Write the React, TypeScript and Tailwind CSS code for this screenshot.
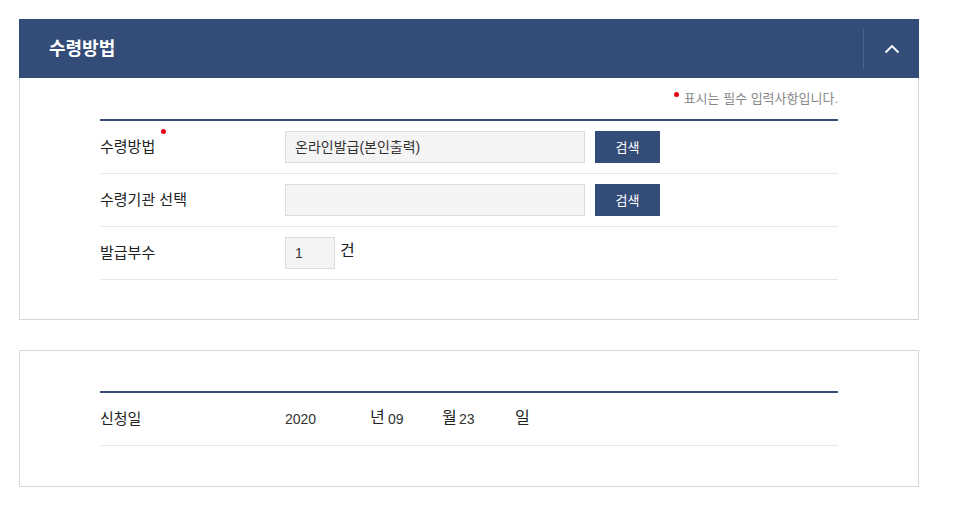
const font = "font-['Liberation_Sans','Noto_Sans_CJK_KR',sans-serif]";

function ChevronUp() {
    return (
        <svg width="16" height="10" viewBox="0 0 16 10" fill="none" aria-hidden="true">
            <path d="M1.5 8.5L8 2l6.5 6.5" stroke="white" strokeWidth="1.8" />
        </svg>
    );
}

function SearchButton() {
    return (
        <button
            type="button"
            className="ml-[10px] h-[32px] w-[65px] bg-[#334c78] text-[13px] leading-none text-white"
        >
            검색
        </button>
    );
}

export default function App() {
    return (
        <div className={`${font} min-h-[511px] bg-white px-[19px] pt-[19px] text-[#222]`}>
            <section className="w-[900px]">
                <header className="flex h-[59px] items-center bg-[#334c78]">
                    <h2 className="flex-1 pl-[30px] text-[18px] font-bold leading-none text-white">
                        수령방법
                    </h2>
                    <div className="h-[40px] w-px bg-[#4b6390]" />
                    <button type="button" className="grid h-[59px] w-[55px] place-items-center">
                        <ChevronUp />
                    </button>
                </header>

                <div className="border border-t-0 border-[#d6d6d6] px-[80px] pb-[39px] pt-[13px]">
                    <p className="flex items-center justify-end text-[13px] leading-[16px] text-[#888]">
                        <span className="mr-[5px] mb-[9px] h-[5px] w-[5px] rounded-full bg-[#e60012]" />
                        표시는 필수 입력사항입니다.
                    </p>

                    <div className="mt-[12px] border-t-2 border-[#334c78]">
                        <div className="flex h-[53px] items-center border-b border-[#e8e8e8]">
                            <div className="relative w-[185px] text-[15px]">
                                수령방법
                                <span className="absolute left-[61px] top-[-7px] h-[5px] w-[5px] rounded-full bg-[#e60012]" />
                            </div>
                            <div className="flex h-[32px] w-[300px] items-center border border-[#dcdcdc] bg-[#f4f4f4] px-[9px] text-[14px] text-[#333]">
                                온라인발급(본인출력)
                            </div>
                            <SearchButton />
                        </div>

                        <div className="flex h-[53px] items-center border-b border-[#e8e8e8]">
                            <div className="w-[185px] text-[15px]">수령기관 선택</div>
                            <div className="h-[32px] w-[300px] border border-[#dcdcdc] bg-[#f4f4f4]" />
                            <SearchButton />
                        </div>

                        <div className="flex h-[53px] items-center border-b border-[#e8e8e8]">
                            <div className="w-[185px] text-[15px]">발급부수</div>
                            <div className="flex h-[32px] w-[50px] items-center border border-[#dcdcdc] bg-[#f4f4f4] px-[9px] text-[14px] text-[#333]">
                                1
                            </div>
                            <span className="mb-[4px] ml-[5px] text-[16px]">건</span>
                        </div>
                    </div>
                </div>
            </section>

            <section className="mt-[30px] w-[900px] border border-[#d6d6d6] px-[80px] pb-[40px] pt-[40px]">
                <div className="border-t-2 border-[#334c78]">
                    <div className="flex h-[53px] items-center border-b border-[#e8e8e8]">
                        <div className="w-[185px] text-[15px]">신청일</div>
                        <span className="w-[85px] text-[14px] text-[#333]">2020</span>
                        <span className="mb-[2px] w-[18px] text-[16px]">년</span>
                        <span className="w-[54px] text-[14px] text-[#333]">09</span>
                        <span className="mb-[2px] w-[17px] text-[16px]">월</span>
                        <span className="w-[56px] text-[14px] text-[#333]">23</span>
                        <span className="mb-[2px] text-[16px]">일</span>
                    </div>
                </div>
            </section>
        </div>
    );
}
